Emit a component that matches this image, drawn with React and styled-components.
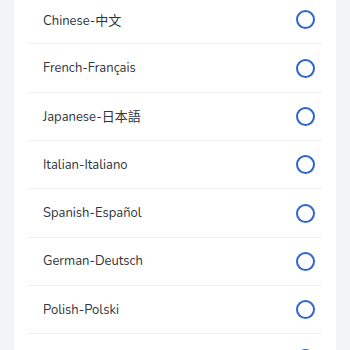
import styled, { createGlobalStyle } from 'styled-components';

const GlobalStyle = createGlobalStyle`
  body {
    margin: 0;
    background: #f3f4f6;
    font-family: "Nunito", "Open Sans", "Noto Sans CJK SC", sans-serif;
  }
`

const languages = [
  'Chinese-中文',
  'French-Français',
  'Japanese-日本語',
  'Italian-Italiano',
  'Spanish-Español',
  'German-Deutsch',
  'Polish-Polski',
  'Russian-Русский',
];

const App = () => {
  return (
    <>
      <GlobalStyle />
      <Panel>
        <List>
          {languages.map((lang) => (
            <Row key={lang}>
              <Label>{lang}</Label>
              <Radio />
            </Row>
          ))}
        </List>
      </Panel>
    </>
  );
};

export default App;

const Panel = styled.div`
  margin: 0 14px;
  background: #ffffff;
  height: 350px;
  overflow: hidden;
`

const List = styled.div`
  margin-top: -4px;
  padding: 0 14px;
  display: flex;
  flex-direction: column;
`

const Row = styled.div`
  height: 48.35px;
  box-sizing: border-box;
  display: flex;
  align-items: center;
  justify-content: space-between;
  padding: 0 7px 0 15px;
  border-bottom: 1.5px solid #f0f0f0;
`

const Label = styled.span`
  font-size: 13px;
  color: #2f353b;
`

const Radio = styled.span`
  box-sizing: border-box;
  width: 19px;
  height: 19px;
  border: 2px solid #2f64d2;
  border-radius: 50%;
`
